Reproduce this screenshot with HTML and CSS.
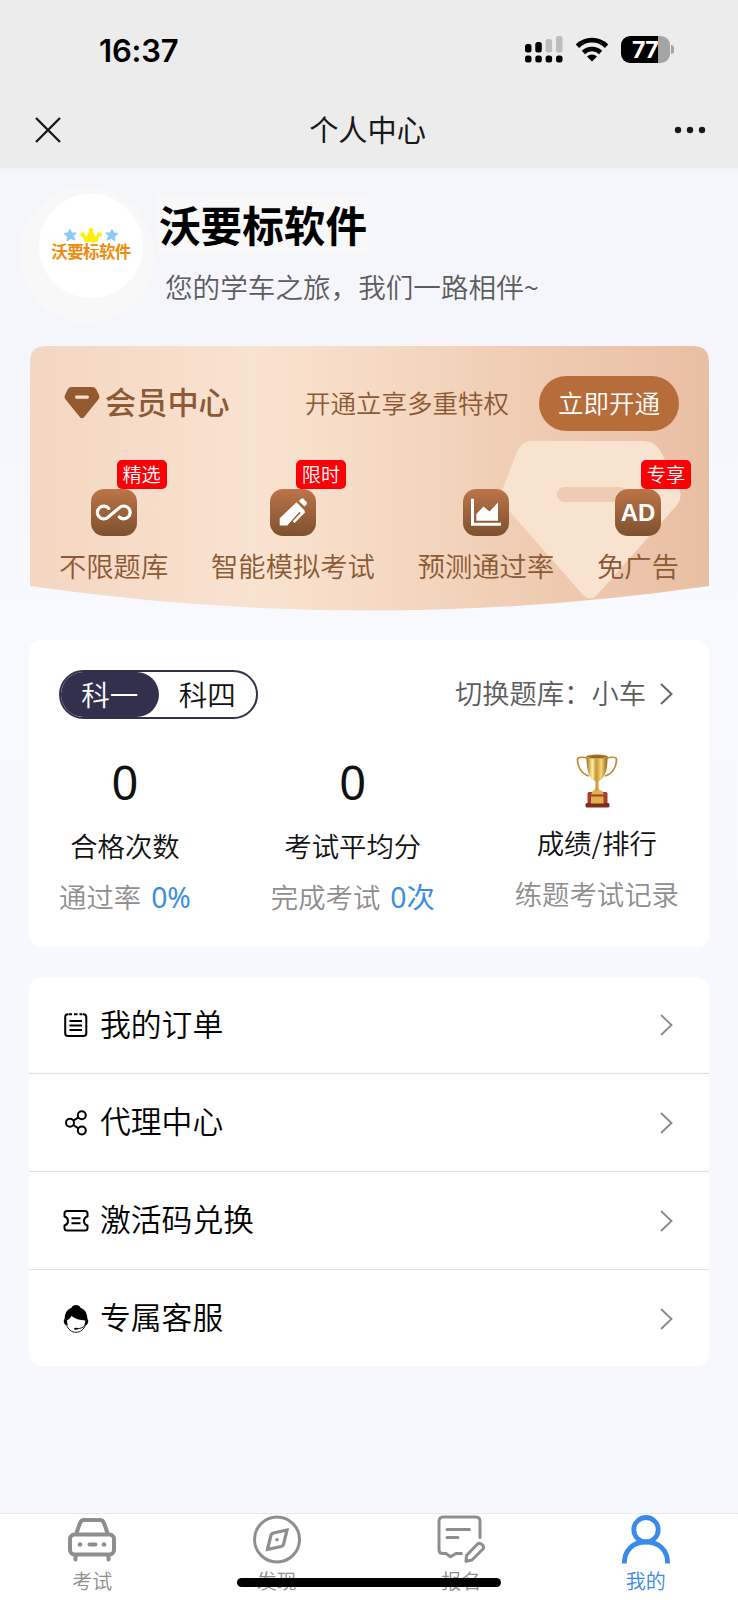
FILE: index.html
```html
<!DOCTYPE html>
<html lang="zh-CN">
<head>
<meta charset="utf-8">
<title>个人中心</title>
<link rel="stylesheet" href="styles.css">
</head>
<body>
<div class="page">
  <header class="top">
    <div class="status">
      <span class="time">16:37</span>
      <div class="status-icons">
        <svg class="signal" width="38" height="28" viewBox="0 0 38 28">
          <g fill="#000"><rect x="0" y="8" width="6.500" height="8.500" rx="2.500"/><rect x="10.300" y="6" width="6.500" height="10.500" rx="2.500"/></g>
          <g fill="#bdbdbd"><rect x="20.600" y="3" width="6.500" height="13.500" rx="2"/><rect x="31" y="0" width="6.500" height="16.500" rx="2"/></g>
          <g fill="#000"><rect x="0" y="19.500" width="6.500" height="7" rx="2.500"/><rect x="10.300" y="19.500" width="6.500" height="7" rx="2.500"/><rect x="20.600" y="19.500" width="6.500" height="7" rx="2.500"/><rect x="31" y="19.500" width="6.500" height="7" rx="2.500"/></g>
        </svg>
        <svg class="wifi" width="34" height="26" viewBox="0 0 34 26">
          <path d="M2.500 9.200a20.500 20.500 0 0 1 29 0" fill="none" stroke="#000" stroke-width="4.800"/>
          <path d="M8.400 15.500a12.200 12.200 0 0 1 17.200 0" fill="none" stroke="#000" stroke-width="4.600"/>
          <path d="M17 24.500l-5-5a7.200 7.200 0 0 1 10 0z"/>
        </svg>
        <div class="battery"><span class="battery-level">77</span><i class="battery-nub"></i></div>
      </div>
    </div>
    <div class="nav">
      <svg width="26" height="26" viewBox="0 0 26 26"><path d="M1 1l24 24M25 1L1 25" stroke="#181818" stroke-width="2.400" fill="none"/></svg>
      <h1 class="nav-title">个人中心</h1>
      <svg width="32" height="8" viewBox="0 0 32 8" fill="#181818"><circle cx="4" cy="4" r="3.200"/><circle cx="16" cy="4" r="3.200"/><circle cx="28" cy="4" r="3.200"/></svg>
    </div>
  </header>

  <section class="profile">
    <div class="avatar">
      <div class="avatar-inner">
        <svg width="54" height="15" viewBox="0 0 54 15">
          <path d="M6 1.500l1.900 3.600 4.200-.2-2.700 3 1.500 4.200-4.100-1.700-3.600 2.500.2-4.400L0 5.600l4.300-.8z" fill="#8ccbf8" stroke="#8ccbf8" stroke-linejoin="round"/>
          <path d="M48 1.500l-1.900 3.600-4.200-.2 2.700 3-1.500 4.200 4.100-1.700 3.600 2.500-.2-4.400L54 5.600l-4.300-.8z" fill="#8ccbf8" stroke="#8ccbf8" stroke-linejoin="round"/>
          <path d="M18 5l4.500 3.500 3.700-7h1.600L31.500 8.500 36 5l-2.200 8.500Q27 15 20.200 13.500z" fill="#fdf000"/><g fill="#fdf000"><circle cx="18.500" cy="6.500" r="2.300"/><circle cx="27" cy="2.200" r="2.200"/><circle cx="35.500" cy="6.500" r="2.300"/></g>
        </svg>
        <span class="logo-text">沃要标软件</span>
      </div>
    </div>
    <div class="profile-text">
      <div class="name">沃要标软件</div>
      <div class="slogan">您的学车之旅，我们一路相伴~</div>
    </div>
  </section>

  <section class="vip">
    <svg class="vip-bg" width="679" height="266" viewBox="0 0 679 266">
      <defs>
        <linearGradient id="gold" x1="0" y1="0" x2="1" y2="0"><stop offset="0" stop-color="#f4d6c2"/><stop offset=".33" stop-color="#f8e3d0"/><stop offset=".47" stop-color="#f6dcc7"/><stop offset=".75" stop-color="#efcbb2"/><stop offset="1" stop-color="#e9bfa3"/></linearGradient>
      </defs>
      <path d="M0 16Q0 0 16 0H663Q679 0 679 16V240Q339.500 289 0 240Z" fill="url(#gold)"/>
      <path d="M502 95H613Q626 95 632 108L649 143Q653 151 647 159L567 249Q560 256 553 249L474 159Q469 151 473 142L486 108Q491 95 502 95Z" fill="#f8e3d0"/>
      <rect x="527" y="141" width="70" height="15" rx="7.500" fill="#efcbb4"/>
    </svg>
    <div class="vip-head">
      <svg width="36" height="33" viewBox="0 0 36 33"><path d="M8 1H28Q31 1 32.200 3.300L35 9Q36 11.500 34.300 13.600L20 31.200Q18 33.300 16 31.200L1.600 13.600Q0 11.500 1 9L3.800 3.300Q5 1 8 1Z" fill="#94592e"/><rect x="11" y="9.500" width="14" height="3.200" rx="1.600" fill="#f8e3d0"/></svg>
      <h2 class="vip-title">会员中心</h2>
      <span class="vip-tip">开通立享多重特权</span>
      <span class="vip-btn">立即开通</span>
    </div>
    <div class="perks">
      <div class="perk">
        <div class="perk-icon"><svg width="46" height="46" viewBox="0 0 46 46"><path d="M17.700 19.400A6.400 6.400 0 1 0 17 28.300L28.500 18.600A6.400 6.400 0 1 1 28.300 28" fill="none" stroke="#fff" stroke-width="3.200" stroke-linecap="round"/></svg><span class="badge">精选</span></div>
        <span>不限题库</span>
      </div>
      <div class="perk">
        <div class="perk-icon"><svg width="46" height="46" viewBox="0 0 46 46" fill="#fff"><path d="M9.700 29.200L26.500 13.300 34.600 21.500 35 23.500 24.600 34 22.700 32.200 30.600 24 29.500 22.800 17.200 36.500H9.700Z"/><path d="M28.800 12L31.500 9.600Q32.700 9 33.700 9.900L36.600 13Q37.400 14.200 36.600 15.300L34.500 17.600Z"/></svg><span class="badge">限时</span></div>
        <span>智能模拟考试</span>
      </div>
      <div class="perk">
        <div class="perk-icon"><svg width="46" height="46" viewBox="0 0 46 46" fill="#fff"><path d="M8 9.700h3V33.800H38V36.800H8Z"/><path d="M13.300 31.700V25L20.500 17.500 26.500 22.500 35 13.600V31.700Z"/></svg></div>
        <span>预测通过率</span>
      </div>
      <div class="perk">
        <div class="perk-icon"><b class="ad">AD</b><span class="badge">专享</span></div>
        <span>免广告</span>
      </div>
    </div>
  </section>

  <section class="card stats">
    <div class="stats-head">
      <div class="switch"><span class="on">科一</span><span>科四</span></div>
      <div class="bank"><span>切换题库：小车</span><svg width="13" height="22" viewBox="0 0 13 22"><path d="M1 1l10.500 10L1 21" fill="none" stroke="#666" stroke-width="2"/></svg></div>
    </div>
    <div class="stats-row">
      <div class="stat"><span class="num">0</span><span class="lab">合格次数</span><span class="sub">通过率<em>0%</em></span></div>
      <div class="stat"><span class="num">0</span><span class="lab">考试平均分</span><span class="sub">完成考试<em>0次</em></span></div>
      <div class="stat rank">
        <svg class="cup" width="42" height="54" viewBox="0 0 42 54">
          <defs><linearGradient id="cup" x1="0" x2="1" y1="0" y2="0"><stop offset="0" stop-color="#a8701a"/><stop offset=".28" stop-color="#fff0a8"/><stop offset=".46" stop-color="#c9912f"/><stop offset=".7" stop-color="#f6d67b"/><stop offset="1" stop-color="#94600f"/></linearGradient></defs>
          <path d="M12 4.500C8 3 1.500 2.500 1.500 5 1.500 12 5 20 13 22M30 4.500C34 3 40.500 2.500 40.500 5 40.500 12 37 20 29 22" fill="none" stroke="#c28a2c" stroke-width="1.700"/>
          <path d="M10.500 2H31.500C31.500 15 30 23.500 22.500 27.500V33C23 37 26 38.500 29 40H13C16 38.500 19 37 19.500 33V27.500C12 23.500 10.500 15 10.500 2Z" fill="url(#cup)"/>
          <ellipse cx="21" cy="2.600" rx="10.500" ry="1.900" fill="#8d642b" stroke="#dbb454" stroke-width=".8"/>
          <rect x="11.500" y="38" width="20" height="12.500" rx="1.500" fill="#a2402d"/><path d="M15 40.500L17 36.500H26L28 40.500Z" fill="#dbb252"/><rect x="9.500" y="49" width="24" height="4.500" rx="1.500" fill="#7e2c20"/><rect x="15" y="42.500" width="12.500" height="7" fill="#e0b04c"/>
        </svg>
        <span class="lab">成绩/排行</span><span class="sub">练题考试记录</span>
      </div>
    </div>
  </section>

  <section class="card menu">
    <div class="item">
      <svg width="28" height="28" viewBox="0 0 28 28" fill="none" stroke="#000" stroke-width="2"><path d="M6.500 3.200H6Q3.200 3.200 3.200 6V22.200Q3.200 25 6 25H21.500Q24.300 25 24.300 22.200V6Q24.300 3.200 21.500 3.200H21M12 3.200H15.500"/><path d="M7.500 10H20M7.500 14.500H20M7.500 19H20M7 3.200H10M17.500 3.200H20.500"/></svg>
      <span>我的订单</span><svg class="arrow" width="13" height="22" viewBox="0 0 13 22"><path d="M1 1l10.500 10L1 21"/></svg>
    </div>
    <div class="item">
      <svg width="28" height="28" viewBox="0 0 28 28" fill="none" stroke="#000" stroke-width="2"><circle cx="8" cy="13.800" r="4"/><circle cx="19.800" cy="6.200" r="4"/><circle cx="19.800" cy="21.500" r="4"/><path d="M11.400 11.600L16.400 8.400M11.400 16L16.400 19.300"/></svg>
      <span>代理中心</span><svg class="arrow" width="13" height="22" viewBox="0 0 13 22"><path d="M1 1l10.500 10L1 21"/></svg>
    </div>
    <div class="item">
      <svg width="28" height="28" viewBox="0 0 28 28" fill="none" stroke="#000" stroke-width="2" stroke-linejoin="round"><path d="M5 4H23Q25.500 4 25.500 6.500V9.500Q22 10.500 22 14T25.500 18.500V21Q25.500 23.500 23 23.500H5Q2.500 23.500 2.500 21V18.500Q6 17.500 6 14T2.500 9.500V6.500Q2.500 4 5 4Z"/><path d="M9.500 11.300H18.500M9.500 16.300H18.500"/></svg>
      <span>激活码兑换</span><svg class="arrow" width="13" height="22" viewBox="0 0 13 22"><path d="M1 1l10.500 10L1 21"/></svg>
    </div>
    <div class="item">
      <svg width="28" height="28" viewBox="0 0 28 28"><path d="M9.500 2.700Q10.500 0 14 0T18.500 2.700Q25 5 25.500 14Q27.500 17 24.500 20H23L5 20H3.500Q0.500 17 2.500 14Q3 5 9.500 2.700Z"/><path d="M9.500 11Q8 14 5 15.200C5 22 9 26.500 14 26.500S23 22 23.300 15.500Q14.500 15 9.500 11Z" fill="#fff"/><path d="M4.500 19.500C6 24.500 9.500 27.300 14 27.300S22 24.500 23.600 19.500Q21 24 14.500 23.500" fill="none" stroke="#000" stroke-width=".9"/><ellipse cx="14" cy="23.700" rx="2" ry="1"/></svg>
      <span>专属客服</span><svg class="arrow" width="13" height="22" viewBox="0 0 13 22"><path d="M1 1l10.500 10L1 21"/></svg>
    </div>
  </section>

  <nav class="tabs">
    <div class="tab">
      <svg width="50" height="50" viewBox="0 0 50 50" fill="none" stroke="#8e8e8e" stroke-width="4"><path d="M9.500 19L13 9Q14.300 6 17 6H33Q35.700 6 37 9L40.500 19"/><rect x="3" y="20.500" width="44" height="20" rx="4.500"/><path d="M8.500 41V45.500M41.500 41V45.500M22.500 30.500H28.500" stroke-linecap="round"/><g fill="#8e8e8e" stroke="none"><circle cx="13" cy="30.500" r="2.300"/><circle cx="37" cy="30.500" r="2.300"/></g></svg>
      <span>考试</span>
    </div>
    <div class="tab">
      <svg width="50" height="50" viewBox="0 0 50 50" fill="none" stroke="#8e8e8e" stroke-width="3"><circle cx="25" cy="25.500" r="22.500"/><path d="M35 16L21.500 19Q19.500 19.500 19 21L15.500 35.500 29 32.500Q31 32 31.500 30.500Z" stroke-width="3.200"/><circle cx="25" cy="25.800" r="1.800" fill="#8e8e8e" stroke="none"/></svg>
      <span>发现</span>
    </div>
    <div class="tab">
      <svg width="50" height="50" viewBox="0 0 50 50" fill="none" stroke="#8e8e8e" stroke-width="3" stroke-linecap="round" stroke-linejoin="round"><path d="M25.500 39.500H20L14.500 42.800 10 39.500H7Q3 39.500 3 35.500V7.500Q3 3 7 3H40Q44 3 44 7.500V23.500"/><path d="M11 15.500H33.500M11 23.500H22"/><path d="M30.500 41.500L41.500 30Q43.500 28.300 46 30.500T47 35L36 46 30 47.300Z"/></svg>
      <span>报名</span>
    </div>
    <div class="tab active">
      <svg width="50" height="50" viewBox="0 0 50 50" fill="none" stroke="#3a8aea" stroke-width="4.800"><circle cx="25" cy="15.700" r="12.200"/><path d="M3.300 49.500C3.300 36 12 28 25 28S46.700 36 46.700 49.500"/></svg>
      <span>我的</span>
    </div>
    <i class="home-bar"></i>
  </nav>
</div>
</body>
</html>
```
FILE: styles.css
```css
* { box-sizing: border-box; }
body { margin: 0; font-family: "Noto Sans CJK SC", sans-serif; font-weight: 350; color: #111; }
h1, h2 { margin: 0; }
svg { display: block; flex: none; }
em, i { font-style: normal; }
.page { width: 738px; height: 1600px; overflow: hidden; display: flex; flex-direction: column; background: linear-gradient(#f1f3fc 168px, #f4f6fb 176px, #f5f6fb 346px, #f8f9fe 610px, #f7f8fd); }

.top { height: 168px; background: #ececec; flex: none; }
.status { height: 100px; padding: 0 64px 0 99px; display: flex; justify-content: space-between; align-items: center; }
.time { padding-top: 1px; font: 600 31px/36px Inter, sans-serif; letter-spacing: -.2px; color: #000; }
.status-icons { display: flex; align-items: center; gap: 12px; padding-bottom: 1px; }
.battery { position: relative; width: 49px; height: 27px; margin-right: 4px; border-radius: 9px; background: linear-gradient(90deg, #000 37px, #a5a5a5 37px); }
.battery-level { display: block; padding-right: 1px; text-align: center; color: #fff; font: 700 23px/28px Inter, sans-serif; letter-spacing: -.5px; }
.battery-nub { position: absolute; right: -4px; top: 9px; width: 3px; height: 9px; border-radius: 0 3px 3px 0; background: #a5a5a5; }
.nav { height: 60px; padding: 0 32px 0 35px; display: flex; justify-content: space-between; align-items: center; }
.nav-title { padding-bottom: 5px; font-size: 29.200px; font-weight: 400; line-height: 40px; color: #181818; }

.profile { height: 178px; flex: none; padding: 19px 0 0 19px; display: flex; }
.avatar { width: 136px; height: 136px; border-radius: 50%; background: #f8f8f9; padding: 7px 0 0 20px; flex: none; }
.avatar-inner { width: 104px; height: 104px; border-radius: 50%; background: #fff; display: flex; flex-direction: column; align-items: center; padding-top: 34px; }
.logo-text { font-size: 16.500px; font-weight: 700; line-height: 16px; color: #ee8b0d; letter-spacing: -.6px; white-space: nowrap; }
.profile-text { padding: 8px 0 0 2px; }
.name { width: 212px; height: 59px; background: #f8f8f8; padding-left: 2px; font-size: 41.600px; line-height: 59px; font-weight: 700; color: #000; white-space: nowrap; }
.slogan { margin: 12px 0 0 8px; font-size: 27.600px; line-height: 40px; color: #5c5c5e; white-space: nowrap; }

.vip { position: relative; width: 679px; height: 266px; margin-left: 30px; flex: none; color: #8b5934; }
.vip-bg { position: absolute; left: 0; top: 0; }
.vip-head { position: relative; padding: 30px 30px 0 34px; display: flex; align-items: center; }
.vip-head > svg { margin-bottom: 3px; }
.vip-title { margin-left: 5px; padding-bottom: 5px; font-size: 31.200px; line-height: 44px; font-weight: 500; }
.vip-tip { margin-left: auto; padding-bottom: 4px; font-size: 25.500px; }
.vip-btn { width: 140px; height: 55px; margin-left: 30px; border-radius: 28px; background: #b66d3a; color: #fff; font-size: 25.500px; line-height: 51px; text-align: center; }
.perks { position: relative; padding: 58px 30px 0 29px; display: flex; justify-content: space-between; font-size: 27.300px; line-height: 40px; }
.perk { display: flex; flex-direction: column; align-items: center; gap: 9px; }
.perk-icon { position: relative; width: 46px; height: 47px; border-radius: 13px; background: linear-gradient(#bc7447, #7e512f); }
.ad { display: block; text-align: center; color: #fff; font: 700 24px/47px "Liberation Sans", sans-serif; }
.badge { position: absolute; left: 26px; top: -29px; width: 50px; height: 29px; border-radius: 5px; background: #fb0006; color: #fff; font-size: 19.200px; line-height: 28px; text-align: center; }

.card { width: 680px; margin-left: 29px; border-radius: 13px; background: #fff; flex: none; }
.stats { height: 307px; margin-top: 28px; padding: 30px 30px 0; }
.stats-head { display: flex; justify-content: space-between; align-items: center; }
.switch { display: flex; width: 199px; height: 49px; border: 2px solid #33304d; border-radius: 25px; font-size: 28.500px; line-height: 43px; text-align: center; }
.switch span { flex: 1; }
.switch .on { background: #33304d; color: #fff; border-radius: 25px; }
.bank { display: flex; align-items: center; gap: 14px; padding: 0 6px 0 0; font-size: 27.300px; line-height: 40px; color: #5c5c5e; }
.bank span { padding-bottom: 5px; }
.bank svg { margin-bottom: 2px; }
.stats-row { margin-top: 30px; display: flex; justify-content: space-between; }
.stat { display: flex; flex-direction: column; align-items: center; font-size: 27.400px; line-height: 40px; }
.num { padding-top: 3px; font-family: "Noto Sans", sans-serif; font-weight: 400; font-size: 47px; line-height: 60px; }
.lab { margin-top: 13px; }
.sub { margin-top: 11px; color: #8e8e8e; white-space: nowrap; }
.sub em { margin-left: 10px; color: #3a8ee6; font-family: "Noto Sans", "Noto Sans CJK SC", sans-serif; font-size: 28.300px; font-weight: 400; }
.cup { margin: 5px 0 0; }
.rank .lab { margin-top: 14px; }

.menu { height: 389px; margin-top: 30px; }
.item { height: 98px; padding: 0 36px 0 33px; display: flex; align-items: center; font-size: 30.800px; color: #000; border-bottom: 1px solid #e0e0e0; }
.item:first-child { height: 97px; }
.item:last-child { height: 97px; border: 0; }
.item span { margin-left: 10px; padding-bottom: 6px; }
.arrow { margin-left: auto; fill: none; stroke: #888; stroke-width: 1.800; }

.tabs { position: relative; height: 87px; margin-top: auto; flex: none; display: flex; background: #fff; border-top: 1px solid #e6e8ea; }
.tab { flex: 1; display: flex; flex-direction: column; align-items: center; font-size: 20px; line-height: 34px; color: #8e8e8e; }
.tab.active { color: #3a8aea; }
.home-bar { position: absolute; left: 237px; top: 64px; width: 264px; height: 9px; border-radius: 5px; background: #000; }
```
